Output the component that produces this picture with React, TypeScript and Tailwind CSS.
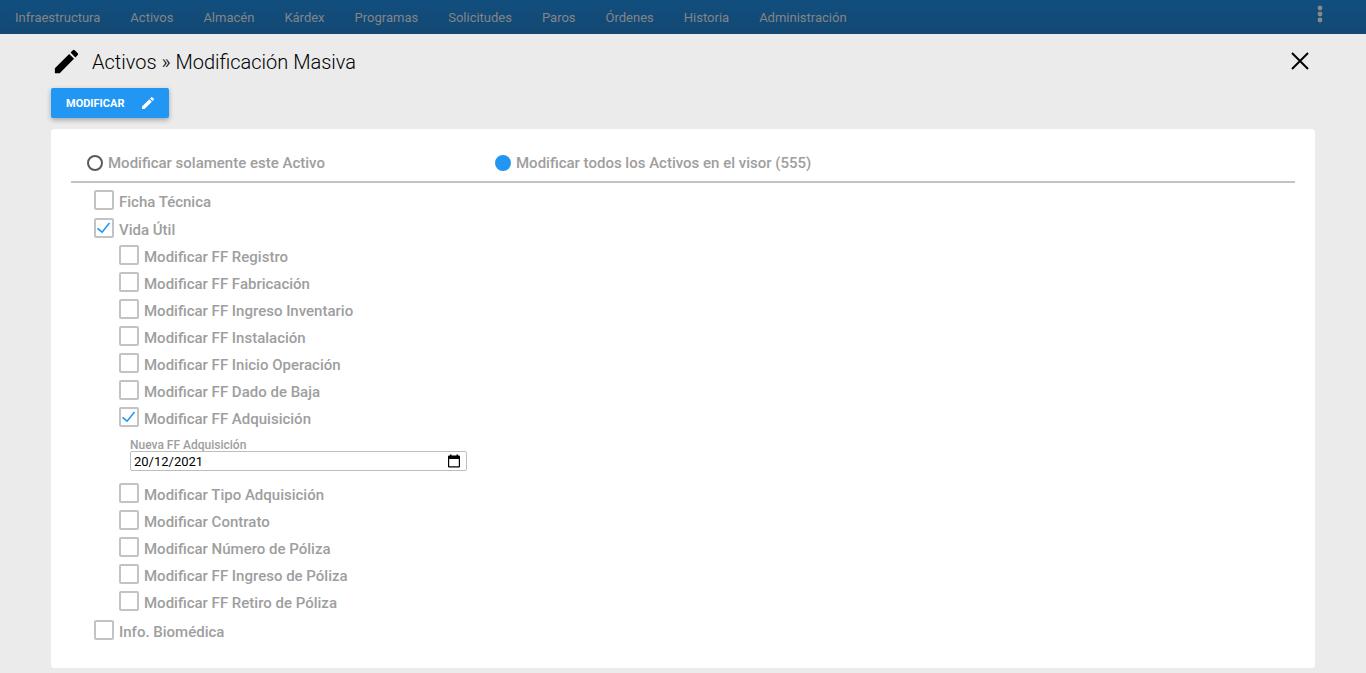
import React, { useState } from 'react';

interface Option {
  id: string;
  label: string;
}

const MENU = [
  'Infraestructura',
  'Activos',
  'Almacén',
  'Kárdex',
  'Programas',
  'Solicitudes',
  'Paros',
  'Órdenes',
  'Historia',
  'Administración',
];

const DATE_OPTIONS: Option[] = [
  { id: 'registro', label: 'Modificar FF Registro' },
  { id: 'fabricacion', label: 'Modificar FF Fabricación' },
  { id: 'inventario', label: 'Modificar FF Ingreso Inventario' },
  { id: 'instalacion', label: 'Modificar FF Instalación' },
  { id: 'operacion', label: 'Modificar FF Inicio Operación' },
  { id: 'baja', label: 'Modificar FF Dado de Baja' },
  { id: 'adquisicion', label: 'Modificar FF Adquisición' },
];

const POLICY_OPTIONS: Option[] = [
  { id: 'tipo', label: 'Modificar Tipo Adquisición' },
  { id: 'contrato', label: 'Modificar Contrato' },
  { id: 'poliza', label: 'Modificar Número de Póliza' },
  { id: 'ingresoPoliza', label: 'Modificar FF Ingreso de Póliza' },
  { id: 'retiroPoliza', label: 'Modificar FF Retiro de Póliza' },
];

const PencilIcon: React.FC<{ className: string }> = ({ className }) => (
  <svg className={className} viewBox="0 0 24 24" fill="currentColor" aria-hidden="true">
    <path d="M3 17.25V21h3.75L17.81 9.94l-3.75-3.75L3 17.25zM20.71 7.04a1 1 0 000-1.41l-2.34-2.34a1 1 0 00-1.41 0l-1.83 1.83 3.75 3.75 1.83-1.83z" />
  </svg>
);

interface CheckProps {
  option: Option;
  checked: boolean;
  onToggle: (id: string) => void;
}

const Check: React.FC<CheckProps> = ({ option, checked, onToggle }) => (
  <div className="flex h-[27px] items-start">
    <label className="relative flex cursor-pointer items-start gap-[5px]">
      <input
        type="checkbox"
        checked={checked}
        onChange={() => onToggle(option.id)}
        className="size-5 shrink-0 appearance-none rounded-[2px] border-2 border-[#c3c3c3] bg-white"
      />
      {checked && (
        <svg className="pointer-events-none absolute left-0 top-0 size-5" viewBox="0 0 20 20" fill="none" stroke="#2196f3" strokeWidth="1.6" aria-hidden="true">
          <path d="M3.5 10.3l4.6 3.9L15.5 5" />
        </svg>
      )}
      <span className="leading-6">{option.label}</span>
    </label>
  </div>
);

const App: React.FC = () => {
  const [scope, setScope] = useState('todos');
  const [date, setDate] = useState('20/12/2021');
  const [selected, setSelected] = useState<string[]>(['vida', 'adquisicion']);

  const toggle = (id: string) =>
    setSelected(prev => (prev.includes(id) ? prev.filter(s => s !== id) : [...prev, id]));

  const renderCheck = (option: Option) => (
    <Check key={option.id} option={option} checked={selected.includes(option.id)} onToggle={toggle} />
  );

  const radioClass =
    'size-4 shrink-0 appearance-none rounded-full border-2 border-[#5a5a5a] checked:border-[#2196f3] checked:bg-[#2196f3]';

  return (
    <div className="min-h-screen bg-[#ebebeb] font-['Roboto',sans-serif] text-black">
      <nav className="flex h-[34px] items-center justify-between bg-linear-to-b from-[#114e7e] to-[#134873] pl-[15px] pr-[42px]">
        <ul className="flex gap-[30px] pt-0.5 text-[13px] text-[#858585]">
          {MENU.map(item => (
            <li key={item}>
              <a href="#">{item}</a>
            </li>
          ))}
        </ul>
        <button type="button" aria-label="Más opciones" className="mb-1.5 text-[#8a8a8a]">
          <svg className="h-[18px] w-2" viewBox="0 0 8 18" fill="currentColor">
            <circle cx="4" cy="3" r="2.4" />
            <circle cx="4" cy="9" r="2.4" />
            <circle cx="4" cy="15" r="2.4" />
          </svg>
        </button>
      </nav>

      <main className="px-[51px] pb-[5px]">
        <header className="flex h-[54px] items-center justify-between pr-1">
          <div className="flex items-center gap-[10px]">
            <PencilIcon className="size-[31px]" />
            <h1 className="pt-0.5 text-[20px] font-light">Activos » Modificación Masiva</h1>
          </div>
          <button type="button" aria-label="Cerrar">
            <svg className="size-[22px]" viewBox="0 0 22 22" fill="none" stroke="currentColor" strokeWidth="2">
              <path d="M3 3l16 16M19 3L3 19" />
            </svg>
          </button>
        </header>

        <button type="button" className="flex h-[30px] items-center gap-4 rounded-[2px] bg-[#2196f3] pl-[15px] pr-[13px] text-[11px] font-bold text-white shadow-[0_2px_5px_rgba(0,0,0,0.3)]">
          <span className="pt-0.5">MODIFICAR</span>
          <PencilIcon className="size-4" />
        </button>

        <form className="mt-[11px] rounded-[3px] bg-white px-5 pb-[21px] pt-5 text-[15px] font-medium text-[#9e9e9e]">
          <div className="grid grid-cols-3 border-b-2 border-[#c6c2c2] pb-1">
            <label className="flex h-7 items-center gap-[5px] px-4">
              <input type="radio" name="scope" checked={scope === 'este'} onChange={() => setScope('este')} className={radioClass} />
              Modificar solamente este Activo
            </label>
            <label className="flex h-7 items-center gap-[5px] px-4">
              <input type="radio" name="scope" checked={scope === 'todos'} onChange={() => setScope('todos')} className={radioClass} />
              Modificar todos los Activos en el visor (555)
            </label>
          </div>

          <div className="pl-[23px] pt-[7px]">
            <div className="mb-px">{renderCheck({ id: 'ficha', label: 'Ficha Técnica' })}</div>
            {renderCheck({ id: 'vida', label: 'Vida Útil' })}
            <div className="mb-0.5 pl-[25px]">
              {DATE_OPTIONS.map(renderCheck)}
              <div className="flex flex-col pb-3 pl-[11px] pt-[5px]">
                <label htmlFor="fechaAdquisicion" className="text-[12px] leading-3">
                  Nueva FF Adquisición
                </label>
                <div className="flex h-5 w-[337px] max-w-full items-center rounded-[2px] border border-[#bdbdbd] pl-[3px] pr-1.5 text-black">
                  <input
                    id="fechaAdquisicion"
                    type="text"
                    value={date}
                    onChange={e => setDate(e.target.value)}
                    className="min-w-0 flex-1 pt-px text-[13px] font-normal outline-none"
                  />
                  <button type="button" aria-label="Abrir calendario">
                    <svg className="h-[14px] w-3" viewBox="0 0 12 14" fill="currentColor">
                      <path fillRule="evenodd" d="M2 0.5h1.5v1h5v-1H10v1h1a1 1 0 011 1v10a1 1 0 01-1 1H1a1 1 0 01-1-1v-10a1 1 0 011-1h1zM1.2 5v7.3h9.6V5z" />
                    </svg>
                  </button>
                </div>
              </div>
              {POLICY_OPTIONS.map(renderCheck)}
            </div>
            {renderCheck({ id: 'biomedica', label: 'Info. Biomédica' })}
          </div>
        </form>
      </main>
    </div>
  );
};

export default App;
